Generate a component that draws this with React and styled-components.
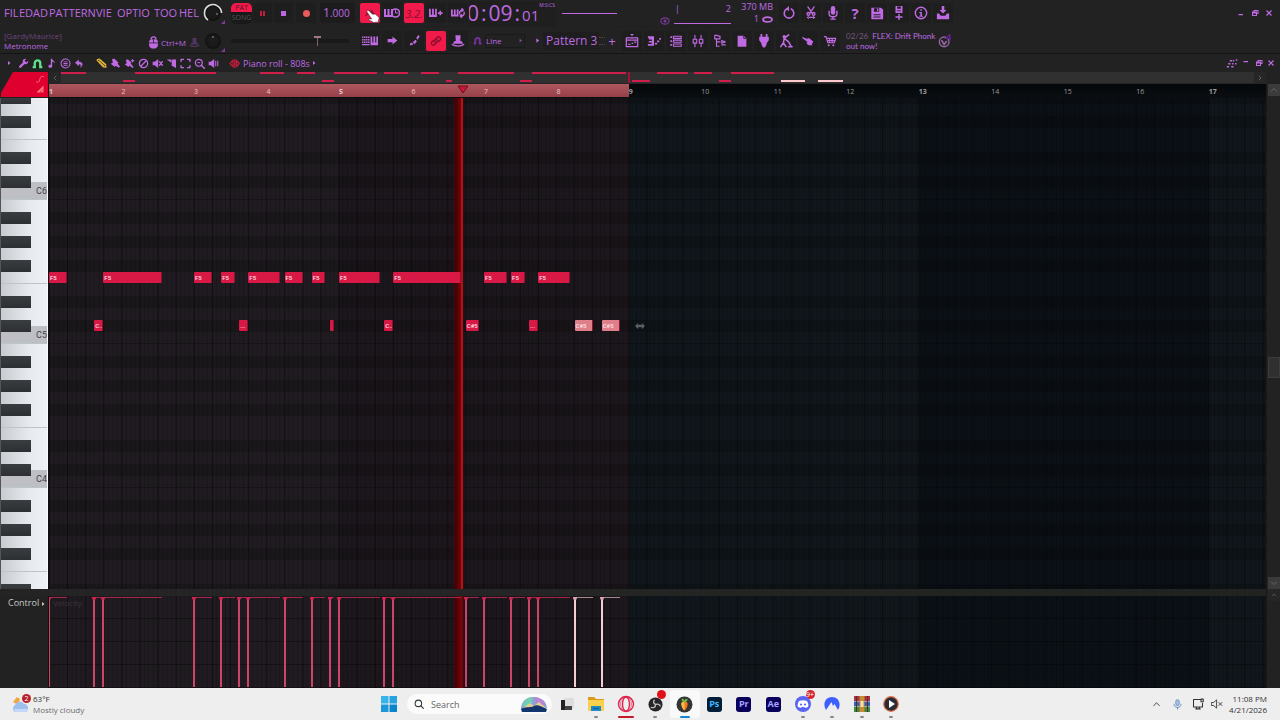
import React, { useState } from "react"
import styled, { createGlobalStyle, css, ThemeProvider } from "styled-components"

const theme = {
    panel: "#222222",
    purple: "#bf6ae2",
    purpleDim: "#6d4580",
    red: "#f2194b",
    note: "#d81845",
    ghost: "#df7f8a",
    taskbar: "#eeeeee",
    font: `"Open Sans", "Noto Sans", sans-serif`
}

const BARS = 16.79
const LOOP_BARS = 8
const PLAYHEAD = 5.71

const GlobalStyle = createGlobalStyle`
    * {
        box-sizing: border-box;
    }
    body {
        margin: 0;
        background: #222222;
        font-family: ${theme.font};
    }
    button, input, select {
        font-family: inherit;
        margin: 0;
        padding: 0;
        border: 0;
        background: none;
        color: inherit;
    }
    svg {
        display: block;
        flex: none;
    }
`

/* ---------- icons, all drawn on a 16 unit square ---------- */

const line = { fill: "none", stroke: "currentColor", strokeWidth: 1.6, strokeLinecap: "round", strokeLinejoin: "round" }

const icons = {
    caret: <path d="M6 4l5 4-5 4z" />,
    metronome: <path {...line} d="M3 11l4-4 2-1 4 4M7 6h4" />,
    waitInput: <><path d="M0 4h2v6h1.500V4h2v6H7V4h2v8H0z" /><circle cx="11.500" cy="8" r="4" {...line} /><path {...line} strokeWidth="1" d="M11.500 5.500V8h2" /></>,
    pianoPlus: <><path d="M0 3h2v7h1.500V3h2v7H7V3h2v9.500H0z" /><path d="M12 5.500h1.800v1.700h1.700V9h-1.700v1.700H12V9h-1.700V7.200H12z" /></>,
    pianoLoop: <><path d="M0 4h2v6h1.300V4h2v6h1.300V4h2v8H0z" /><path {...line} d="M10 9V6.500l2-2h2M12.500 3l1.500 1.500L12.500 6M15 7v2.500l-2 2h-2.500M12 10l-1.500 1.500L12 13" /></>,
    typing: <><path d="M0 3.500h1.500V5H0zM2 3.500h1.500V5H2zM4 3.500h1.500V5H4zM6 3.500h1.500V5H6zM0 6h1.500v1.500H0zM2 6h1.500v1.500H2zM4 6h1.500v1.500H4zM6 6h1.500v1.500H6zM0 8.500h1.500V10H0zM2 8.500h1.500V10H2zM4 8.500h1.500V10H4zM6 8.500h1.500V10H6zM0 11h7.500v1.300H0z" /><path d="M8.500 3.500h1.800v6h1.100v-6h1.800v6h1.100v-6H16v8.800H8.500z" /></>,
    arrow: <path d="M2 6h6V3l6 5-6 5v-3H2z" />,
    steps: <path d="M2 12l3-1.500 1.500 2.500L3 14zM6 10l3-3 2 2-3 3.500zM10 5l2.500-3.500 2 1L12 7z" />,
    link: <g {...line}><path d="M7 9.500a2.200 2.200 0 0 1 0-3l3-3a2.200 2.200 0 0 1 3 3L11 8.500" /><path d="M9 6.500a2.200 2.200 0 0 1 0 3l-3 3a2.200 2.200 0 0 1-3-3L5 7.500" /></g>,
    stamp: <><path d="M5 1.500h6L10.500 8H12l2 3H2l2-3h1.500z" /><path {...line} d="M1.500 12c3 2.500 10 2.500 13 0" /></>,
    playlist: <><path d="M6 0h4L8 2.500z" /><path {...line} strokeWidth="1.400" d="M1.500 4.500h13v10h-13zM1.500 7h13" /><path d="M3.500 11h3v1.400h-3zM7.500 10h2v1.400h-2zM10.500 8.500h2.500v1.400h-2.500z" /></>,
    pianoRoll: <><path d="M1 2.500h7v11H1v-2h4.500V9.700H2V8h3.500V6.200H2v-1.700H1z" /><path d="M9 10h2.500v2H9zM11.500 7.500H14v2h-2.500zM14 4.500h2v2h-2z" /></>,
    rack: <><path {...line} strokeWidth="1.200" d="M5 2.500h9v2.500H5zM5 7h9v2.500H5zM5 11.500h9V14H5z" /><path d="M1.500 2.500h2v2h-2zM1.500 7h2v2h-2zM1.500 11.500h2v2h-2z" /></>,
    mixer: <><path {...line} strokeWidth="1.300" d="M4.500 1.500v13M11.500 1.500v13" /><path {...line} strokeWidth="1.300" fill="#222" d="M2.500 6h4v4.500h-4zM9.500 6h4v4.500h-4z" /></>,
    browser: <path {...line} strokeWidth="1.300" d="M2 1.500h3l1 1h2v3H2zM4 6v8h3M4 9h4M10 7.500v3l4-1.500zM10 12.500h4" />,
    file: <><path d="M3 2h7l3 3v9.500H3z" /><path d="M10 2v3h3" stroke="#222" fill="none" /></>,
    plug: <path d="M4 0h2v3h4V0h2v3h1.500v4L11 10.500V12l-2 3.500H7L5 12v-1.500L2.500 7V3H4z" />,
    person: <><circle cx="6" cy="3" r="2" /><path {...line} strokeWidth="1.800" d="M6 5l5 4M6 5l-1 5-3 4.500M5 10l3 4.500M11 9l3 5.500M11 14.500h4M6 5l5-4" /></>,
    hand: <path d="M1 3l5.500 2.500L9 4.500l5 4L12 13l-4-.5-2-2.500 1.500-1L2 5z" />,
    cart: <><path {...line} strokeWidth="1.300" d="M1.500 3h2l2 7h7.500l1.500-5H4.500M5 7.500h8.500M7.500 5v5M10.500 5v5" /><circle cx="6.500" cy="12.800" r="1.200" /><circle cx="11.800" cy="12.800" r="1.200" /></>,
    undoRound: <><path {...line} strokeWidth="1.800" d="M10.500 3.500a5.500 5.500 0 1 1-5 0" /><path d="M8 0v6L4.500 3z" /></>,
    cut: <><path {...line} strokeWidth="1.500" d="M4.500 1l5 7.500M11.500 1l-5 7.500" /><circle cx="5" cy="9" r="1.500" {...line} /><circle cx="11" cy="9" r="1.500" {...line} /><path d="M5.500 11L3 13l2.500 2zM10.500 11l2.500 2-2.500 2zM5 12.400h6v1.200H5z" /></>,
    mic: <><rect x="5.500" y="0" width="5" height="10" rx="2.500" /><path {...line} d="M3.500 6v2.500c0 5 9 5 9 0V6M8 12.500v2M5.500 15h5" /></>,
    save: <path fillRule="evenodd" d="M1.500 2h11L15 4v11H1.500zM4.500 2.500v4h6v-4zM8 3h1.500v3H8zM4 9.500v1h8v-1zM4 12v1h8v-1z" />,
    saveNew: <path fillRule="evenodd" d="M4 0h8v8H4zM6 .5v2.500h4V.5zM5.500 5v1h5V5zM7.200 9h1.600v2.700H12v1.600H8.800V16H7.200v-2.700H4v-1.600h3.200z" />,
    info: <><circle cx="8" cy="8" r="6.500" {...line} /><path d="M7.200 3.800H9v1.700H7.200zM6 6.800h3v4.400h1.200v1.100H6v-1.100h1.200V7.900H6z" /></>,
    exportFile: <><path d="M6.500 0h3v4.500H12l-4 4-4-4h2.500z" /><path d="M1 8.500h2.500L5.500 11h5l2-2.500H15V15H1z" /></>,
    mouse: <><path {...line} d="M5 4a3 3 0 1 1 6 0" /><path d="M2.500 7c0-4 11-4 11 0v4c0 6-11 6-11 0z" /><path d="M2.500 8.500h11M8 4v4.500" stroke="#222" /></>,
    wrench: <path d="M15 5.500a4 4 0 0 1-5.500 3.300L4.300 14a1.800 1.800 0 0 1-2.500-2.500L7 6.500A4 4 0 0 1 12 1.300L9.500 3.800l2.700 2.700 2.600-2.500z" />,
    horseshoe: <path fill="none" stroke="currentColor" strokeWidth="3.400" d="M1 13.200h3V7.500a4 4 0 0 1 8 0v5.700h3" />,
    note: <path d="M7 1h2c0 3 5 3 3.500 7-.5-2-2-2.500-3.500-2.500V12c0 3-5.500 3-5.500 0 0-2 2.500-2.500 3.500-1.800z" />,
    menuRound: <><circle cx="8" cy="8" r="6.500" {...line} /><path d="M5 5h6v1.300H5zM5 7.400h6v1.300H5zM5 9.800h6v1.300H5z" /></>,
    undo: <path d="M7 2v3.500c7 0 7 6 1.500 9 2.500-4 1.500-5.500-1.500-5.500v3L1.500 7z" />,
    pencil: <><path {...line} strokeWidth="1.700" d="M1.500 3l3-1.500L14 9.500l.5 4-4-.5z" /><path {...line} d="M4 5l8 7M5.500 3L13 9.500" /></>,
    brush: <path d="M3 1.500L6.500 1l6 6-1.500 1 3.500 4.500-1.500 1.800-5-3-1 1.700L1 8.500 4 7z" />,
    brushPlus: <><path d="M2.500 2.500L6 2l5 5-1.500 1 4.500 5-1.500 1.500-5-3.500-1 2L1 9l3-1.500z" /><path d="M12.500 1l1 2 2 1-2 1-1 2-1-2-2-1 2-1z" /></>,
    ban: <g {...line} strokeWidth="1.900"><circle cx="8" cy="8" r="6" /><path d="M4 12l8-8" /></g>,
    mute: <><path d="M1 5.500h3L9 1.500v13l-5-4H1z" /><path {...line} strokeWidth="1.900" d="M11 5.500l4 5M15 5.500l-4 5" /></>,
    slice: <><path d="M1 2h7v5z" /><path d="M9 2h5.500v12.500L8 11z" /></>,
    select: <path {...line} strokeWidth="1.900" d="M1.500 5V2H5M11 2h3.500v3M14.500 11v3H11M5 14H1.500v-3" />,
    zoom: <><circle cx="7" cy="7" r="5" {...line} strokeWidth="1.800" /><path {...line} strokeWidth="2.200" d="M11 11l4 4" /><path d="M5 6h4v1.500H5z" /></>,
    speaker: <><path d="M1 5.500h3L9 1.500v13l-5-4H1z" /><path d="M10.500 4H12v8h-1.500zM13.500 4H15v8h-1.500z" /></>,
    plugin: <g {...line} strokeWidth="1.900"><path d="M6 3L1.500 8 6 13zM8.500 2v12M11 3.500L15 8l-4 4.500z" /></g>,
    slope: <path {...line} d="M1 14h4c3 0 2-11 6-11h4" />,
    ramp: <path d="M1 15L15 1v14h-2.500V8h-1v7H9v-4H8v4z" />,
    tools: <path d="M1 12h3v2H1zM3 8h3v2H3zM5 4h3v2H5zM9 4h2v2H9zM13 3h2v2h-2zM8 8h2v2H8zM12 8h2v2h-2zM7 12h3v2H7z" />,
    minimize: <path d="M3 10h9v2.500H3z" />,
    minimizeTop: <path d="M3 4h9v2.500H3z" />,
    restore: <path fillRule="evenodd" d="M5 2h10v8h-3v4H2V5h3zM4 9h6v3H4zM7 4v1h5v3h1V4z" />,
    close: <path fill="none" stroke="currentColor" strokeWidth="2.400" d="M3 3l10 10M13 3L3 13" />,
    lips: <ellipse cx="8" cy="8" rx="6.500" ry="3.500" fill="none" stroke="currentColor" strokeWidth="2.600" />,
    eye: <><ellipse cx="8" cy="8" rx="6.500" ry="5" fill="none" stroke="currentColor" strokeWidth="1.800" /><circle cx="8" cy="8" r="2.500" /></>,
    chevronUp: <path {...line} d="M3 10l5-5 5 5" />,
    chevronDown: <path {...line} d="M3 6l5 5 5-5" />,
    chevronLeft: <path {...line} d="M10 4L6 8l4 4" />,
    chevronRight: <path {...line} d="M6 4l4 4-4 4" />,
    resize: <path d="M0 8l5-5v3h6V3l5 5-5 5v-3H5v3z" />,
    pointer: <path fill="#ffffff" stroke="#20141a" strokeWidth=".6" d="M1 2.500c0-1.500 1.500-1.500 2.500-.5l4 4 3-.3 4.500 4L14 15l-5 .5-6-3 .5-1.500 3 .5L1.500 4z" />,
    searchGlass: <g {...line} strokeWidth="1.700"><circle cx="7" cy="7" r="5.200" /><path d="M11 11l4 4" /></g>,
    micTray: <><rect x="5.500" y="1" width="5" height="8.500" rx="2.500" fill="#a9c4e4" stroke="#4c78ae" /><path fill="none" stroke="#4c78ae" strokeWidth="1.200" d="M3 7v1c0 5.500 10 5.500 10 0V7M8 12v3" /></>,
    monitor: <path {...line} strokeWidth="1.400" d="M11 2H2v10h12V7M5 14.500h6M12 1.500h3v3.500h-3zM6 12v2M10 12v2" />,
    trayMute: <path {...line} strokeWidth="1.200" d="M1 6h2.500L7.500 2.500v11L3.500 10H1zM10.500 6l4 4M14.500 6l-4 4" />
}

const Icon = ({ name, size = 14 }) => (
    <svg width={size} height={size} viewBox="0 0 16 16" fill="currentColor" aria-hidden="true">{icons[name]}</svg>
)

/* ---------- shell ---------- */

const Page = styled.div`
    display: flex;
    flex-direction: column;
    height: 100vh;
    overflow: hidden;
    color: ${({ theme }) => theme.purple};
    background: ${({ theme }) => theme.panel};
`

const ToolRow = styled.div`
    display: flex;
    align-items: center;
    height: 27px;
    padding: ${({ $last }) => $last ? 1 : 0}px 0 0 4px;
    white-space: nowrap;
    border-bottom: 1px solid ${({ $last }) => $last ? "#151515" : "#202020"};
`

const Menu = styled.nav`
    display: flex;
    flex: none;
    width: 197px;
`

const MenuItem = styled.button`
    flex: none;
    width: ${({ $width }) => $width}px;
    font-size: 11px;
    font-weight: 500;
    line-height: 16px;
    text-align: left;
    cursor: pointer;
`

const KnobBox = styled.div`
    display: flex;
    align-items: center;
    justify-content: center;
    flex: none;
    width: 24px;
    margin-right: 6px;
`

const Modes = styled.div`
    display: flex;
    flex-direction: column;
    flex: none;
    width: 21px;
    height: 21px;
    overflow: hidden;
    border-radius: 5px;
    background: #191919;
`

const Mode = styled.button`
    height: ${({ $on }) => $on ? 9 : 12}px;
    font-size: 7px;
    line-height: 9px;
    color: ${({ $on }) => $on ? "#5d1022" : "#555555"};
    background: ${({ $on, theme }) => $on ? theme.red : "transparent"};
`

const IconButton = styled.button`
    position: relative;
    display: flex;
    align-items: center;
    justify-content: center;
    flex: none;
    width: ${({ $width }) => $width || 22}px;
    height: 22px;
    border: 1px solid ${({ theme }) => theme.panel};
    border-radius: 3px;
    background: #1e1e1e;
    cursor: pointer;
    ${({ $on, theme }) => $on && css`
        color: #8b0f2c;
        background: ${theme.red};
    `}
`

const HandCursor = styled.span`
    position: absolute;
    left: 6px;
    top: 6px;
`

const Dot = styled.span`
    width: ${({ $size }) => $size}px;
    height: ${({ $size }) => $size}px;
    border-radius: ${({ $round }) => $round ? "50%" : 0};
    background: ${({ $color }) => $color};
`

const PauseMark = styled.span`
    width: 5px;
    height: 5px;
    border: solid #c01c3c;
    border-width: 0 2px;
`

const Group = styled.div`
    display: flex;
    align-items: center;
    flex: none;
    margin-left: ${({ $gap }) => $gap || 0}px;
`

const Tempo = styled.output`
    flex: none;
    width: 35px;
    margin: 0 4px 0 3px;
    padding-left: 3px;
    font-size: 12px;
    line-height: 20px;
    border-radius: 3px;
    background: #1c1c1c;

    small {
        font-size: 10px;
    }
`

const StepLabel = styled.span`
    font-size: 11px;
    font-style: italic;
`

const Clock = styled.div`
    display: flex;
    align-items: baseline;
    flex: none;
    gap: 2px;
    width: 87px;
    height: 25px;
    font-size: 21px;
    line-height: 24px;
    background: #1f1f1f;

    small {
        font-size: 15px;
    }
`

const ClippedDigit = styled.span`
    display: flex;
    justify-content: flex-end;
    width: 10px;
    overflow: hidden;
`

const ClockUnit = styled.span`
    align-self: flex-start;
    margin-left: -2px;
    font-size: 5px;
    line-height: 8px;
`

const Scope = styled.div`
    flex: none;
    width: 55px;
    height: 1px;
    margin: 0 43px 0 6px;
    background: ${({ theme }) => theme.purple};
`

const Eye = styled.span`
    align-self: flex-end;
    color: #7a3a9c;
`

const Load = styled.div`
    display: flex;
    justify-content: space-between;
    flex: none;
    width: 57px;
    height: 22px;
    margin-left: 4px;
    padding-left: 1px;
    font-size: 9px;
    line-height: 13px;
    border-bottom: 1px solid ${({ theme }) => theme.purple};
`

const Memory = styled.div`
    display: flex;
    flex-direction: column;
    align-items: flex-end;
    flex: none;
    width: 42px;
    margin-right: 5px;
    font-size: 9px;
    line-height: 12px;

    span {
        display: flex;
        align-items: center;
        gap: 3px;
    }
`

const Question = styled.span`
    font-size: 15px;
    font-weight: 700;
    line-height: 20px;
`

const WindowButtons = styled.div`
    display: flex;
    margin-left: auto;
    padding-right: ${({ $pad }) => $pad}px;
`

const PlainButton = styled.button`
    display: flex;
    align-items: center;
    justify-content: center;
    flex: none;
    width: ${({ $width }) => $width || 14}px;
    height: 16px;
    color: ${({ $color }) => $color || "inherit"};
    cursor: pointer;
`

const Hint = styled.div`
    flex: none;
    width: 141px;
    font-size: 8px;
    line-height: 10px;

    p {
        margin: 0;
    }

    p:first-child {
        color: ${({ theme }) => theme.purpleDim};
    }
`

const Shortcut = styled.div`
    display: flex;
    align-items: center;
    flex: none;
    gap: 1px;
    width: 56px;
    padding: 4px 0 0 2px;
    font-size: 8px;
    line-height: 16px;

    svg:last-child {
        margin-left: 2px;
        color: #513661;
    }
`

const PitchSlider = styled.input`
    appearance: none;
    flex: none;
    width: 118px;
    height: 4px;
    margin-right: 10px;
    border-radius: 2px;
    background: #191919;

    &::-webkit-slider-thumb {
        appearance: none;
        width: 7px;
        height: 10px;
        background: linear-gradient(#a27684, #a27684) 0 0 / 7px 2px no-repeat, linear-gradient(#85606c, #85606c) 3px 0 / 1px 10px no-repeat;
    }
`

const SnapField = styled.label`
    display: flex;
    align-items: center;
    flex: none;
    width: 40px;
    height: 14px;
    border: 1px solid #1a1a1a;
    color: #8c54a6;
`

const SnapSelect = styled.select`
    appearance: none;
    flex: 1;
    min-width: 0;
    height: 12px;
    font-size: 8px;
    line-height: 10px;
    color: ${({ theme }) => theme.purple};
`

const PatternName = styled.button`
    flex: none;
    width: 56px;
    padding-left: 3px;
    font-size: 12px;
    font-weight: 500;
    line-height: 18px;
    text-align: left;
    background: #1e1e1e;
`

const Spinner = styled.span`
    width: 6px;
    height: 8px;
    border: dotted #4a4a4a;
    border-width: 1px 0;
`

const News = styled.p`
    flex: none;
    width: 89px;
    margin: 0 0 0 5px;
    font-family: Lato, sans-serif;
    font-size: 8px;
    line-height: 10px;

    time {
        margin-right: 4px;
        color: #75587f;
    }
`

const RollTitle = styled.header`
    display: flex;
    align-items: center;
    flex: none;
    height: 18px;
    padding-left: 2px;
    font-size: 9px;
    font-weight: 500;
    white-space: nowrap;
`

const RollName = styled.span`
    margin-left: 2px;
`

/* ---------- piano roll ---------- */

const Roll = styled.main`
    display: grid;
    flex: 1;
    min-height: 0;
    grid-template-columns: 48px minmax(0, 1fr) 14px;
    grid-template-rows: 12px 14px minmax(0, 1fr) 7px 92px;
`

const Corner = styled.div`
    grid-row: span 2;
    display: flex;
    flex-direction: column;
    align-items: flex-end;
    gap: 2px;
    padding: 3px 4px;
    color: #ff8080;
    background: #e0002f;
    clip-path: polygon(27% 0, 100% 0, 100% 96%, 2% 96%, 2% 80%);
`

const Overview = styled.div`
    display: flex;
    margin-left: 1px;
    background: #303030;
    border-bottom: 1px solid #252525;
`

const OverviewTrack = styled.div`
    position: relative;
    flex: 1;
`

const OverviewNote = styled.span`
    position: absolute;
    top: ${({ $low }) => $low ? 8 : 0}px;
    height: 2px;
    background: ${({ $ghost }) => $ghost ? "#ffc9cd" : "#cf1d4c"};
`

const LoopEnd = styled.span`
    position: absolute;
    top: 0;
    width: 2px;
    height: 11px;
    background: #a80f32;
`

const ScrollButton = styled.button`
    display: flex;
    align-items: center;
    justify-content: center;
    flex: none;
    width: 12px;
    height: 12px;
    color: #6e6e6e;
    background: ${({ $lit }) => $lit ? "#3b3b3b" : "#262626"};
`

const Ruler = styled.div`
    position: relative;
    height: 14px;
    border-left: 1px solid #111;
    font-size: 7px;
    line-height: 15px;
    background: linear-gradient(#050709, #0a0e12);
`

const Loop = styled.div`
    height: 13px;
    background: linear-gradient(#b0585f, #963f47);
`

const BarNumber = styled.span`
    position: absolute;
    top: 0;
    color: ${({ $loop }) => $loop ? "#e8c4c8" : "#9a9a9a"};
    font-weight: ${({ $major }) => $major ? 700 : 400};
`

const PlayMarker = styled.svg`
    position: absolute;
    top: 1px;
    transform: translateX(-50%);
`

const Keyboard = styled.div`
    display: flex;
    flex-direction: column;
    min-height: 0;
    overflow: hidden;
    border-right: 1px solid #f7f9fb;
    border-left: 1px solid #555;
    background: linear-gradient(90deg, #c8ccd1, #e6eaee 60%, #eef2f6);
`

const Key = styled.div`
    display: flex;
    flex: none;
    height: ${({ $partial }) => $partial ? 6 : 12}px;
    border-bottom: ${({ $edge }) => $edge ? "1px solid #bcc4cc" : 0};
    background: ${({ $note }) => $note === 0 ? "#bdbfc4" : $note === 1 ? "linear-gradient(transparent 50%, #bdbfc4 50%)" : "none"};

    &::before {
        content: "";
        width: 30px;
        background: ${({ $black }) => $black ? "linear-gradient(#393d3f, #2c3032)" : "none"};
    }
`

const KeyLabel = styled.span`
    margin: -3px 0 0 auto;
    font-family: Roboto, sans-serif;
    font-size: 9px;
    line-height: 12px;
    color: #3f4245;
`

const steps = n => css`linear-gradient(90deg, rgba(0, 0, 0, ${n === 4 ? 0.38 : 0.17}) 1px, transparent 1px) 0 0 / calc(100% / ${BARS * n}) 100%`

const zones = css`
    linear-gradient(90deg,
        #1f1b20 0 ${400 / BARS}%,
        #1b171c ${400 / BARS}% ${800 / BARS}%,
        #10161b ${800 / BARS}% ${1200 / BARS}%,
        #0b1016 ${1200 / BARS}% ${1600 / BARS}%,
        #10161b ${1600 / BARS}%)
`

const Canvas = styled.div`
    position: relative;
    min-height: 0;
    overflow: hidden;
    border-left: 1px solid #111;
`

const NoteCanvas = styled(Canvas)`
    background:
        ${steps(4)},
        ${steps(16)},
        repeating-linear-gradient(
            rgba(0, 0, 0, .16) 0 12px, transparent 12px 24px,
            rgba(0, 0, 0, .16) 24px 36px, transparent 36px 60px,
            rgba(0, 0, 0, .16) 60px 72px, transparent 72px 84px,
            rgba(0, 0, 0, .16) 84px 96px, transparent 96px 107px,
            rgba(0, 0, 0, .25) 107px 108px, transparent 108px 120px,
            rgba(0, 0, 0, .16) 120px 132px, transparent 132px 144px) 0 -6px / 100% 1440px,
        ${zones};
`

const VelocityCanvas = styled(Canvas)`
    background:
        ${steps(4)},
        ${steps(16)},
        repeating-linear-gradient(transparent 0 22px, rgba(0, 0, 0, .35) 22px 23px),
        ${zones};
`

const Note = styled.div`
    position: absolute;
    top: ${({ $low }) => $low ? 222 : 174}px;
    height: 11px;
    padding-left: 1px;
    overflow: hidden;
    font-family: Roboto, sans-serif;
    font-size: 6px;
    font-weight: 500;
    line-height: 11px;
    color: #ffe3e8;
    border-radius: 1px;
    border-right: 1px solid #8f1230;
    background: ${({ $ghost, theme }) => $ghost ? theme.ghost : theme.note};
`

const Playhead = styled.div`
    position: absolute;
    top: 0;
    bottom: 0;
    width: 11px;
    transform: translateX(-100%);
    background: linear-gradient(90deg, transparent, #4c0205 50%, #780306);
    border-right: 2px solid ${({ $soft }) => $soft ? "#780306" : "#b90f14"};
`

const ResizeCursor = styled.span`
    position: absolute;
    top: 223px;
    color: #5a5f62;
`

const Divider = styled.div`
    background: linear-gradient(90deg, #242424 48px, #242524 40%, #20231f);
    grid-column: 1 / 3;
`

const Scrollbar = styled.div`
    display: flex;
    flex-direction: column;
    align-items: center;
    grid-row: ${({ $rows }) => $rows};
    grid-column: 3;
    min-height: 0;
    background: #222;
    border-left: 1px solid #1a1a1a;
`

const ScrollThumb = styled.div`
    flex: none;
    width: 12px;
    height: 21px;
    margin: 261px 0 auto;
    border: 1px solid #3c3c3c;
    background: #303030;
`

const ControlHead = styled.div`
    display: flex;
    align-items: flex-start;
    padding: 1px 0 0 8px;
    font-size: 9px;
    line-height: 12px;
    color: #c9c9c9;

    svg {
        margin-top: 3px;
    }
`

const LaneName = styled.button`
    position: absolute;
    left: 4px;
    top: 1px;
    font-size: 8px;
    line-height: 12px;
    color: #3d353c;
`

const VelocityStem = styled.div`
    position: absolute;
    top: 1px;
    bottom: 1px;
    border-top: 1px solid ${({ $ghost }) => $ghost ? "#a48a8e" : "#a52447"};

    &::before {
        content: "";
        position: absolute;
        top: 0;
        bottom: 0;
        left: -1px;
        width: 2px;
        background: ${({ $ghost }) => $ghost ? "#f6cfd5" : "#cc4568"};
    }

    &::after {
        content: "";
        position: absolute;
        top: -1px;
        left: -2px;
        width: 4px;
        height: 3px;
        border-radius: 0 0 2px 2px;
        background: ${({ $ghost }) => $ghost ? "#d9a2aa" : "#d5234f"};
    }
`

/* ---------- taskbar ---------- */

const Taskbar = styled.footer`
    display: flex;
    align-items: center;
    flex: none;
    height: 32px;
    color: #333333;
    background: ${({ theme }) => theme.taskbar};
`

const Side = styled.div`
    display: flex;
    flex: 1;
    align-items: center;
    justify-content: ${({ $end }) => $end ? "flex-end" : "flex-start"};
    gap: ${({ $end }) => $end ? 6 : 2}px;
    padding: 0 13px 0 11px;
    font-size: 8px;
    line-height: 11px;
    text-align: ${({ $end }) => $end ? "right" : "left"};
`

const TwoLines = styled.div`
    margin-left: ${({ $gap }) => $gap || 0}px;

    p {
        margin: 0;
    }
    p + p {
        color: ${({ $dim }) => $dim ? "#6c6c6c" : "inherit"};
    }
`

const StartButton = styled.button`
    display: flex;
    align-items: center;
    justify-content: center;
    width: 22px;
    height: 28px;
    margin-left: 4px;
`

const Search = styled.label`
    display: flex;
    align-items: center;
    gap: 7px;
    width: 145px;
    height: 20px;
    margin: 0 0 0 7px;
    padding: 0 4px 0 7px;
    border-radius: 10px;
    background: #fbfbfb;

    input {
        flex: 1;
        min-width: 0;
        font-size: 9px;
        outline: 0;
    }

    input::placeholder {
        color: #666666;
    }
`

const Apps = styled.div`
    display: grid;
    grid-template-columns: repeat(12, 1fr);
    width: 354px;
`

const AppButton = styled.button`
    position: relative;
    display: flex;
    align-items: center;
    justify-content: center;
    height: 28px;
    border-radius: 3px;
    background: ${({ $active }) => $active ? "#f9f9f9" : "none"};

    &::after {
        content: "";
        position: absolute;
        bottom: 0;
        left: 50%;
        width: ${({ $mark }) => $mark === "dot" ? 4 : $mark === "red" ? 16 : 10}px;
        height: 2px;
        transform: translateX(-50%);
        border-radius: 1px;
        background: ${({ $mark }) => ({ dot: "#888888", red: "#c3192d", blue: "#1685cf" })[$mark] || "none"};
    }
`

const AdobeTile = styled.span`
    width: 15px;
    height: 15px;
    border-radius: 3px;
    font-size: 9px;
    font-weight: 700;
    line-height: 14px;
    text-align: center;
    color: ${({ $color }) => $color};
    background: ${({ $back }) => $back};
`

const Badge = styled.span`
    position: absolute;
    top: ${({ $top }) => $top || 0}px;
    right: ${({ $right }) => $right || 0}px;
    min-width: 9px;
    height: 9px;
    border-radius: 5px;
    font-size: 7px;
    line-height: 9px;
    text-align: center;
    color: #ffffff;
    background: ${({ $color }) => $color || "#d3272f"};
`

const Weather = styled.div`
    position: relative;
    width: 20px;
    height: 20px;
`

// start and length are counted in eighths of a bar
const notes = [
    { at: 0, len: 2, label: "F5" },
    { at: 6, len: 6.5, label: "F5" },
    { at: 16, len: 2, label: "F5" },
    { at: 19, len: 1.5, label: "F5" },
    { at: 22, len: 3.5, label: "F5" },
    { at: 26, len: 2, label: "F5" },
    { at: 29, len: 1.5, label: "F5" },
    { at: 32, len: 4.5, label: "F5" },
    { at: 38, len: 7.5, label: "F5" },
    { at: 48, len: 2.5, label: "F5" },
    { at: 51, len: 1.5, label: "F5" },
    { at: 54, len: 3.5, label: "F5" },
    { at: 5, len: 1, label: "C..", low: true },
    { at: 21, len: 1, label: "...", low: true },
    { at: 31, len: 0.5, label: "", low: true },
    { at: 37, len: 1, label: "C..", low: true },
    { at: 46, len: 1.5, label: "C#5", low: true },
    { at: 53, len: 1, label: "...", low: true },
    { at: 58, len: 2, label: "C#5", low: true, ghost: true },
    { at: 61, len: 2, label: "C#5", low: true, ghost: true }
]

const eighths = n => `${n / 8 / BARS * 100}%`
const span = note => ({ left: eighths(note.at), width: eighths(note.len) })
const overviewSpan = note => ({ left: `${note.at * 1.04}%`, width: `${note.len * 1.04}%` })

const BLACK = [1, 3, 6, 8, 10]
const keys = Array.from({ length: 42 }, (_, i) => {
    const pitch = 80 - i
    return { note: pitch % 12, octave: Math.floor(pitch / 12), first: i === 0 }
})

const menus = [["FIL", 15], ["ED", 14], ["AD", 16], ["PATTERN", 47], ["VIE", 21], ["OPTIO", 37], ["TOO", 25], ["HEL", 20]]
const fileTools = [["undoRound", "Undo"], ["cut", "Cut"], ["mic", "Record audio"], [null, "Help"], ["save", "Save"], ["saveNew", "Save new version"], ["info", "Info"], ["exportFile", "Export"]]
const windows = ["playlist", "pianoRoll", "rack", "mixer", "browser", "file", "plug", "person", "hand", "cart"]
const rollTools = [["caret"], ["wrench"], ["horseshoe", "#5fe28a"], ["note"], ["menuRound"], ["undo"]]
const editTools = [["pencil", "#e5b93c"], ["brush"], ["brushPlus"], ["ban"], ["mute"], ["slice"], ["select"], ["zoom"], ["speaker"]]

const Knob = ({ bright }) => (
    <KnobBox>
        <svg width="24" height="24" viewBox="0 0 24 24">
            <circle cx="12" cy="12" r="7" fill="#1b1b1b" stroke="#141414" strokeWidth="2" />
            {bright && <path d="M7 19A8.500 8.500 0 1 1 20.500 12" fill="none" stroke="#dddddd" strokeWidth="1.600" />}
            <circle cx={bright ? 16 : 12} cy={bright ? 13 : 8} r=".8" fill="#b9a0a8" />
            <path d="M20 23h4v-4z" fill="#7c3aa0" />
        </svg>
    </KnobBox>
)

const Toolbar = () => {
    const [mode, setMode] = useState("PAT")

    return (
        <header>
            <ToolRow>
                <Menu>
                    {menus.map(([label, width]) => <MenuItem key={label} $width={width}>{label}</MenuItem>)}
                </Menu>
                <Knob bright />
                <Modes>
                    {["PAT", "SONG"].map(item => (
                        <Mode key={item} $on={mode === item} onClick={() => setMode(item)}>{item}</Mode>
                    ))}
                </Modes>
                <IconButton $width={21} aria-label="Pause"><PauseMark /></IconButton>
                <IconButton $width={21} aria-label="Stop"><Dot $size={5} $color="#bb68e0" /></IconButton>
                <Group $gap={1}>
                    <IconButton aria-label="Record"><Dot $size={7} $round $color="#e85a5e" /></IconButton>
                </Group>
                <Tempo>1<small>.000</small></Tempo>
                <IconButton $on aria-label="Metronome">
                    <Icon name="metronome" />
                    <HandCursor><Icon name="pointer" /></HandCursor>
                </IconButton>
                <IconButton aria-label="Wait for input"><Icon name="waitInput" size={16} /></IconButton>
                <IconButton $on aria-label="Countdown"><StepLabel>3.2.</StepLabel></IconButton>
                <IconButton aria-label="Overdub"><Icon name="pianoPlus" /></IconButton>
                <IconButton aria-label="Loop recording"><Icon name="pianoLoop" /></IconButton>
                <Clock>
                    <ClippedDigit>0</ClippedDigit>:<span>09</span>:<small>01</small>
                    <ClockUnit>M:S:CS</ClockUnit>
                </Clock>
                <Scope />
                <Eye><Icon name="eye" size={10} /></Eye>
                <Load><span>|</span><span>2</span></Load>
                <Memory><span>370 MB</span><span>1 <Icon name="lips" size={11} /></span></Memory>
                {fileTools.map(([icon, label]) => (
                    <IconButton key={label} aria-label={label}>{icon ? <Icon name={icon} /> : <Question>?</Question>}</IconButton>
                ))}
                <WindowButtons $pad={4}>
                    <PlainButton aria-label="Minimize"><Icon name="minimize" size={8} /></PlainButton>
                    <PlainButton aria-label="Restore"><Icon name="restore" size={8} /></PlainButton>
                    <PlainButton aria-label="Close"><Icon name="close" size={8} /></PlainButton>
                </WindowButtons>
            </ToolRow>
            <ToolRow $last>
                <Hint>
                    <p>[GardyMaurice]</p>
                    <p>Metronome</p>
                </Hint>
                <Shortcut><Icon name="mouse" size={13} />Ctrl+M<Icon name="stamp" size={11} /></Shortcut>
                <Knob />
                <PitchSlider type="range" aria-label="Pitch" defaultValue="75" />
                <IconButton aria-label="Typing keyboard"><Icon name="typing" size={16} /></IconButton>
                <IconButton aria-label="Auto scroll"><Icon name="arrow" size={13} /></IconButton>
                <IconButton aria-label="Slide"><Icon name="steps" size={13} /></IconButton>
                <IconButton $on aria-label="Link"><Icon name="link" /></IconButton>
                <IconButton aria-label="Stamp"><Icon name="stamp" /></IconButton>
                <PlainButton $width={16} $color="#7530a0" aria-label="Snap"><Icon name="horseshoe" size={9} /></PlainButton>
                <SnapField>
                    <SnapSelect aria-label="Snap to"><option>Line</option></SnapSelect>
                    <Icon name="caret" size={7} />
                </SnapField>
                <Group $gap={6}>
                    <PlainButton $width={12} aria-label="Previous pattern"><Icon name="caret" size={9} /></PlainButton>
                    <PatternName>Pattern 3</PatternName>
                    <Spinner />
                    <PlainButton aria-label="Add pattern">+</PlainButton>
                </Group>
                <Group $gap={2}>
                    {windows.map(name => <IconButton key={name} aria-label={name}><Icon name={name} /></IconButton>)}
                </Group>
                <News><time>02/26</time>FLEX: Drift Phonk<br />out now!</News>
                <PlainButton $width={20} aria-label="News">
                    <svg width="14" height="14" viewBox="0 0 16 16">
                        <circle cx="7" cy="9" r="5.500" fill="none" stroke="#96649f" strokeWidth="1.600" />
                        <path d="M4 7l3 5 3-4" fill="none" stroke="#96649f" strokeWidth="2" />
                        <path d="M13.500 0v8M13 1l-4 4h6" fill="none" stroke="#5d2390" strokeWidth="1.600" />
                    </svg>
                </PlainButton>
            </ToolRow>
        </header>
    )
}

const PianoRoll = () => (
    <>
        <RollTitle>
            {rollTools.map(([name, color]) => (
                <PlainButton key={name} $color={color} aria-label={name}><Icon name={name} size={name === "caret" ? 8 : 11} /></PlainButton>
            ))}
            <Group $gap={8}>
                {editTools.map(([name, color]) => (
                    <PlainButton key={name} $color={color} aria-label={name}><Icon name={name} size={11} /></PlainButton>
                ))}
            </Group>
            <Group $gap={7}>
                <PlainButton $color="#c01c3c" aria-label="Channel"><Icon name="plugin" size={11} /></PlainButton>
                <RollName>Piano roll - 808s</RollName>
                <Icon name="caret" size={8} />
            </Group>
            <WindowButtons $pad={3}>
                <PlainButton aria-label="Notes"><Icon name="tools" size={12} /></PlainButton>
                <PlainButton aria-label="Minimize roll"><Icon name="minimizeTop" size={8} /></PlainButton>
                <PlainButton $width={12} aria-label="Restore roll"><Icon name="restore" size={8} /></PlainButton>
                <PlainButton $width={12} aria-label="Close roll"><Icon name="close" size={8} /></PlainButton>
            </WindowButtons>
        </RollTitle>
        <Roll>
            <Corner>
                <Icon name="slope" size={8} />
                <Icon name="ramp" size={8} />
            </Corner>
            <Overview>
                <ScrollButton aria-label="Scroll left"><Icon name="chevronLeft" size={8} /></ScrollButton>
                <OverviewTrack>
                    {notes.map(note => (
                        <OverviewNote key={note.at} $low={note.low} $ghost={note.ghost} style={overviewSpan(note)} />
                    ))}
                    <LoopEnd style={{ left: "47.5%" }} />
                </OverviewTrack>
                <ScrollButton aria-label="Scroll right"><Icon name="chevronRight" size={8} /></ScrollButton>
            </Overview>
            <div />
            <Ruler>
                <Loop style={{ width: `${LOOP_BARS / BARS * 100}%` }} />
                {Array.from({ length: 17 }, (_, i) => (
                    <BarNumber key={i} $loop={i < LOOP_BARS} $major={i % 4 === 0} style={{ left: eighths(i * 8) }}>{i + 1}</BarNumber>
                ))}
                <PlayMarker width="12" height="10" viewBox="0 0 12 10" style={{ left: `${PLAYHEAD / BARS * 100}%` }}>
                    <path d="M1 1h10L6 8z" fill="#d01634" stroke="#64101e" />
                </PlayMarker>
            </Ruler>
            <Scrollbar $rows="2 / 4">
                <ScrollButton $lit aria-label="Scroll up"><Icon name="chevronUp" size={8} /></ScrollButton>
                <ScrollThumb />
                <ScrollButton $lit aria-label="Scroll down"><Icon name="chevronDown" size={8} /></ScrollButton>
            </Scrollbar>
            <Keyboard>
                {keys.map((key, i) => (
                    <Key key={i} $note={key.note} $partial={key.first} $black={BLACK.includes(key.note)} $edge={key.note === 0 || key.note === 5}>
                        {key.note === 0 && <KeyLabel>C{key.octave}</KeyLabel>}
                    </Key>
                ))}
            </Keyboard>
            <NoteCanvas>
                <Playhead style={{ left: `${PLAYHEAD / BARS * 100}%` }} />
                {notes.map(note => (
                    <Note key={note.at} $low={note.low} $ghost={note.ghost} style={span(note)}>{note.label}</Note>
                ))}
                <ResizeCursor style={{ left: eighths(64.7) }}><Icon name="resize" size={10} /></ResizeCursor>
            </NoteCanvas>
            <Divider />
            <Scrollbar $rows="4 / 6">
                <ScrollButton aria-label="Velocity up"><Icon name="chevronUp" size={6} /></ScrollButton>
            </Scrollbar>
            <ControlHead>Control <Icon name="caret" size={8} /></ControlHead>
            <VelocityCanvas>
                <Playhead $soft style={{ left: `${PLAYHEAD / BARS * 100}%` }} />
                <LaneName>Velocity</LaneName>
                {notes.map(note => <VelocityStem key={note.at} $ghost={note.ghost} style={span(note)} />)}
            </VelocityCanvas>
        </Roll>
    </>
)

const WindowsTaskbar = () => (
    <Taskbar>
        <Side>
            <Weather>
                <svg width="20" height="20" viewBox="0 0 20 20">
                    <path d="M2 8l4-5 3 2-2 6z" fill="#f0a63a" />
                    <path d="M4 18a4 4 0 0 1 0-7 5 5 0 0 1 9-1c4-1 6 6 2 8z" fill="#9fbfee" />
                    <path d="M3 15h14c0 2-1 3-3 3H5c-1 0-2-1-2-3z" fill="#c3d8f7" />
                </svg>
                <Badge $color="#b8202a">2</Badge>
            </Weather>
            <TwoLines $dim>
                <p>63°F</p>
                <p>Mostly cloudy</p>
            </TwoLines>
        </Side>
        <StartButton aria-label="Start">
            <svg width="16" height="16" viewBox="0 0 16 16">
                <path d="M0 0h7.500v7.500H0z" fill="#37b5ea" /><path d="M8.500 0H16v7.500H8.500z" fill="#27a3e0" />
                <path d="M0 8.500h7.500V16H0z" fill="#1c97d8" /><path d="M8.500 8.500H16V16H8.500z" fill="#0c84cc" />
            </svg>
        </StartButton>
        <Search>
            <Icon name="searchGlass" size={10} />
            <input type="search" placeholder="Search" aria-label="Search" />
            <svg width="28" height="16" viewBox="0 0 28 16">
                <path d="M1 13C1 5 7 1 13 1s13 3 14 11l-13 3z" fill="#86a5dc" />
                <path d="M2 10C4 3 9 1 13 1l-2 9z" fill="#6fcfb4" />
                <path d="M13 1c6 0 12 3 13 8l-9 1z" fill="#b687d6" />
                <path d="M3 12l7-5 4 3 5-4 7 6z" fill="#e6cf8e" />
                <path d="M1 13c6-3 10-1 13-3s8 1 13 3l-1 3H2z" fill="#12356e" />
            </svg>
        </Search>
        <Apps>
            <AppButton aria-label="Task view">
                <svg width="14" height="14" viewBox="0 0 14 14"><path d="M4 1h10v10H4z" fill="#dddddd" /><path d="M1 3h4v6h7v4H1z" fill="#222222" /><path d="M5 9h7v4H5z" fill="#444444" /></svg>
            </AppButton>
            <AppButton $mark="dot" aria-label="Files">
                <svg width="18" height="16" viewBox="0 0 18 16"><path d="M1 1h6l2 2h8v4H1z" fill="#d99a1c" /><path d="M1 4h16v11H1z" fill="#fbd04b" /><path d="M4 10h10v5H4z" fill="#1e88c9" /><path d="M6 12h6v1H6z" fill="#0d5e95" /></svg>
            </AppButton>
            <AppButton $mark="red" aria-label="Opera GX">
                <svg width="18" height="18" viewBox="0 0 18 18" fill="none" stroke="#e0234e"><circle cx="9" cy="9" r="7.500" strokeWidth="1.400" /><ellipse cx="9" cy="9" rx="3.500" ry="7" strokeWidth="1.400" /><ellipse cx="9" cy="9" rx="5.500" ry="7.500" strokeWidth=".6" /></svg>
            </AppButton>
            <AppButton $mark="dot" aria-label="OBS Studio">
                <svg width="15" height="15" viewBox="0 0 16 16"><circle cx="8" cy="8" r="7.500" fill="#262626" /><path d="M8 8c-2-1-3-3-1-5M8 8c2-1 5 0 5 2M8 8c0 3-2 4-5 3" fill="none" stroke="#bbbbbb" strokeWidth="1.500" /></svg>
                <Badge $right={4} $color="#e0101a" />
            </AppButton>
            <AppButton $active $mark="blue" aria-label="FL Studio">
                <svg width="17" height="17" viewBox="0 0 17 17"><circle cx="8.500" cy="8.500" r="8" fill="#333636" /><path d="M5.500 7c1-2 5-2 6 0 .7 2-1 6-3 7.500-2-1.500-3.700-5.500-3-7.500z" fill="#f07a1c" /><path d="M5.500 7c1-1.500 2-1.500 3-1.400V14.500c-2-1.500-3.700-5.500-3-7.500z" fill="#ffb84a" /><path d="M8 6.500C6 5.500 5 4 6 2.500c1.500 0 2 1 2.500 2 .5-1 1.500-2 3-1.500 0 2-1 3-3 3.500z" fill="#75b843" /></svg>
            </AppButton>
            <AppButton aria-label="Photoshop"><AdobeTile $color="#45b5ff" $back="#001e36">Ps</AdobeTile></AppButton>
            <AppButton aria-label="Premiere Pro"><AdobeTile $color="#a9a4ff" $back="#08005b">Pr</AdobeTile></AppButton>
            <AppButton aria-label="After Effects"><AdobeTile $color="#a9a4ff" $back="#08005b">Ae</AdobeTile></AppButton>
            <AppButton $mark="dot" aria-label="Discord">
                <svg width="16" height="16" viewBox="0 0 16 16"><circle cx="8" cy="8" r="8" fill="#5865f2" /><path d="M4 5c3-1 5-1 8 0 1 2 2 4 1 6l-3 1-.5-1h-3L6 12l-3-1c-1-2 0-4 1-6z" fill="#ffffff" /><circle cx="6" cy="8.500" r="1.100" fill="#5865f2" /><circle cx="10" cy="8.500" r="1.100" fill="#5865f2" /></svg>
                <Badge $right={3}>9+</Badge>
            </AppButton>
            <AppButton $mark="dot" aria-label="NordVPN">
                <svg width="16" height="16" viewBox="0 0 16 16"><path d="M2 14C-2 7 2 1 8 1s10 6 6 13l-3.500-6-1.500 2-1.500-4L2 14z" fill="#3e5fff" /></svg>
            </AppButton>
            <AppButton $mark="dot" aria-label="WinRAR">
                <svg width="16" height="16" viewBox="0 0 16 16"><path d="M0 0h16v5H0z" fill="#a93243" /><path d="M0 5.500h16v4.500H0z" fill="#3a5fb5" /><path d="M0 10.500h16V16H0z" fill="#3c8a3f" /><path d="M5.500 0h5v16h-5z" fill="#c98b34" /><path d="M6.500 5h3v6h-3z" fill="#f4e3b0" /><path d="M2 0h1v16H2zM13 0h1v16h-1z" fill="#5c2b2b" /></svg>
            </AppButton>
            <AppButton $mark="dot" aria-label="Media player">
                <svg width="16" height="16" viewBox="0 0 16 16"><circle cx="8" cy="8" r="7.300" fill="#2b2b33" stroke="#e07550" strokeWidth="1.200" /><path d="M6 4l6 4-6 4z" fill="#ffffff" /></svg>
            </AppButton>
        </Apps>
        <Side $end>
            <PlainButton aria-label="Hidden icons"><Icon name="chevronUp" size={9} /></PlainButton>
            <PlainButton $width={16} aria-label="Microphone"><Icon name="micTray" size={11} /></PlainButton>
            <PlainButton aria-label="Display"><Icon name="monitor" size={12} /></PlainButton>
            <Icon name="trayMute" size={12} />
            <TwoLines>
                <p>11:08 PM</p>
                <p>4/21/2026</p>
            </TwoLines>
        </Side>
    </Taskbar>
)

const App = () => (
    <ThemeProvider theme={theme}>
        <GlobalStyle />
        <Page>
            <Toolbar />
            <PianoRoll />
            <WindowsTaskbar />
        </Page>
    </ThemeProvider>
)

export default App
